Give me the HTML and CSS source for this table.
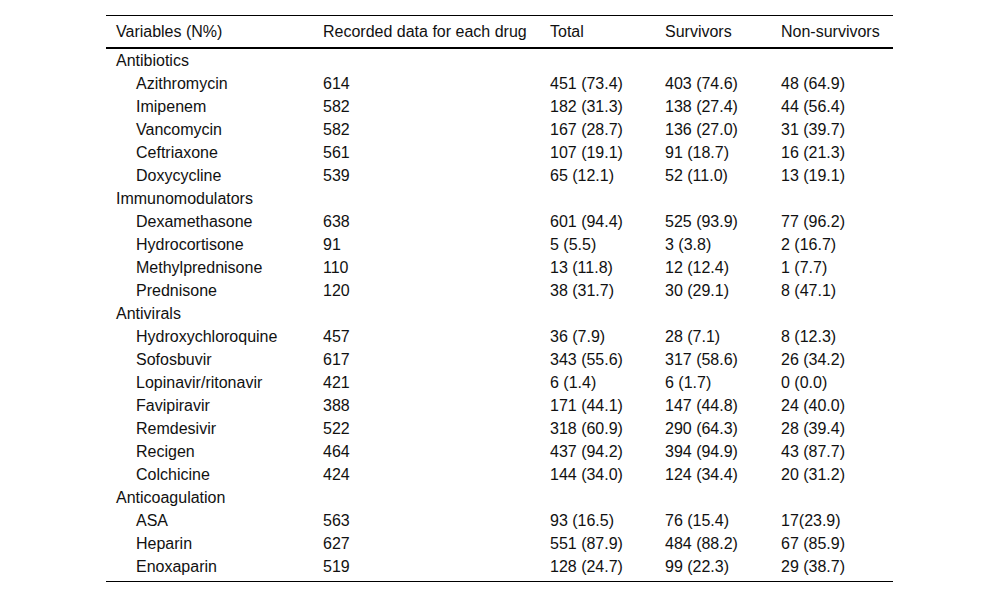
FILE: index.html
```html
<!DOCTYPE html>
<html>
<head>
<meta charset="utf-8">
<link rel="stylesheet" href="styles.css">
</head>
<body>
<div class="page">
<table class="data">
<colgroup>
<col class="c1"><col class="c2"><col class="c3"><col class="c4"><col class="c5">
</colgroup>
<thead>
<tr><th>Variables (N%)</th><th>Recorded data for each drug</th><th>Total</th><th>Survivors</th><th>Non-survivors</th></tr>
</thead>
<tbody>
<tr class="group"><td>Antibiotics</td><td></td><td></td><td></td><td></td></tr>
<tr><td class="ind">Azithromycin</td><td>614</td><td>451 (73.4)</td><td>403 (74.6)</td><td>48 (64.9)</td></tr>
<tr><td class="ind">Imipenem</td><td>582</td><td>182 (31.3)</td><td>138 (27.4)</td><td>44 (56.4)</td></tr>
<tr><td class="ind">Vancomycin</td><td>582</td><td>167 (28.7)</td><td>136 (27.0)</td><td>31 (39.7)</td></tr>
<tr><td class="ind">Ceftriaxone</td><td>561</td><td>107 (19.1)</td><td>91 (18.7)</td><td>16 (21.3)</td></tr>
<tr><td class="ind">Doxycycline</td><td>539</td><td>65 (12.1)</td><td>52 (11.0)</td><td>13 (19.1)</td></tr>
<tr class="group"><td>Immunomodulators</td><td></td><td></td><td></td><td></td></tr>
<tr><td class="ind">Dexamethasone</td><td>638</td><td>601 (94.4)</td><td>525 (93.9)</td><td>77 (96.2)</td></tr>
<tr><td class="ind">Hydrocortisone</td><td>91</td><td>5 (5.5)</td><td>3 (3.8)</td><td>2 (16.7)</td></tr>
<tr><td class="ind">Methylprednisone</td><td>110</td><td>13 (11.8)</td><td>12 (12.4)</td><td>1 (7.7)</td></tr>
<tr><td class="ind">Prednisone</td><td>120</td><td>38 (31.7)</td><td>30 (29.1)</td><td>8 (47.1)</td></tr>
<tr class="group"><td>Antivirals</td><td></td><td></td><td></td><td></td></tr>
<tr><td class="ind">Hydroxychloroquine</td><td>457</td><td>36 (7.9)</td><td>28 (7.1)</td><td>8 (12.3)</td></tr>
<tr><td class="ind">Sofosbuvir</td><td>617</td><td>343 (55.6)</td><td>317 (58.6)</td><td>26 (34.2)</td></tr>
<tr><td class="ind">Lopinavir/ritonavir</td><td>421</td><td>6 (1.4)</td><td>6 (1.7)</td><td>0 (0.0)</td></tr>
<tr><td class="ind">Favipiravir</td><td>388</td><td>171 (44.1)</td><td>147 (44.8)</td><td>24 (40.0)</td></tr>
<tr><td class="ind">Remdesivir</td><td>522</td><td>318 (60.9)</td><td>290 (64.3)</td><td>28 (39.4)</td></tr>
<tr><td class="ind">Recigen</td><td>464</td><td>437 (94.2)</td><td>394 (94.9)</td><td>43 (87.7)</td></tr>
<tr><td class="ind">Colchicine</td><td>424</td><td>144 (34.0)</td><td>124 (34.4)</td><td>20 (31.2)</td></tr>
<tr class="group"><td>Anticoagulation</td><td></td><td></td><td></td><td></td></tr>
<tr><td class="ind">ASA</td><td>563</td><td>93 (16.5)</td><td>76 (15.4)</td><td>17(23.9)</td></tr>
<tr><td class="ind">Heparin</td><td>627</td><td>551 (87.9)</td><td>484 (88.2)</td><td>67 (85.9)</td></tr>
<tr class="last"><td class="ind">Enoxaparin</td><td>519</td><td>128 (24.7)</td><td>99 (22.3)</td><td>29 (38.7)</td></tr>
</tbody>
</table>
</div>
</body>
</html>
```

FILE: styles.css
```css
html, body {
  margin: 0;
  padding: 0;
  background: #ffffff;
}
.page {
  padding: 15px 0 0 106px;
}
.data {
  width: 787px;
  border-collapse: collapse;
  table-layout: fixed;
  font-family: "Liberation Sans", Arial, sans-serif;
  font-size: 16px;
  line-height: 18px;
  color: #111111;
  border-top: 1px solid #000000;
  border-bottom: 1px solid #000000;
}
.c1 { width: 207px; }
.c2 { width: 227px; }
.c3 { width: 115px; }
.c4 { width: 116px; }
.c5 { width: 122px; }
.data th {
  font-weight: normal;
  text-align: left;
  height: 31px;
  padding: 0 0 0 10px;
  border-bottom: 2px solid #000000;
  vertical-align: middle;
  white-space: nowrap;
}
.data td {
  height: 23px;
  padding: 0 0 0 10px;
  vertical-align: middle;
  white-space: nowrap;
}
.data td.ind {
  padding-left: 30px;
}
.data tr.last td {
  padding-bottom: 3px;
}
```
